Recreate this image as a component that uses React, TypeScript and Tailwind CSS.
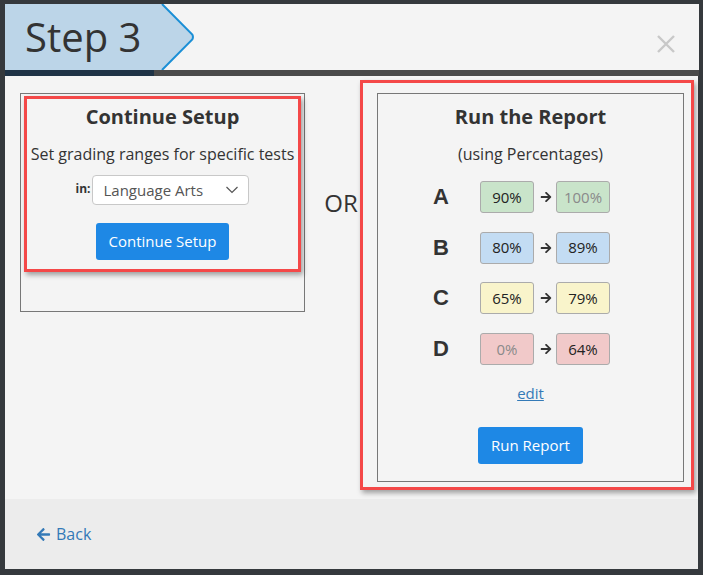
import { FaArrowLeft, FaArrowRight } from "react-icons/fa";

type Grade = { letter: string; from: string; to: string; bg: string; fromDim?: boolean; toDim?: boolean };

const grades: Grade[] = [
  { letter: "A", from: "90%", to: "100%", bg: "bg-[#c9e4ca]", toDim: true },
  { letter: "B", from: "80%", to: "89%", bg: "bg-[#c3dcf3]" },
  { letter: "C", from: "65%", to: "79%", bg: "bg-[#f9f4cb]" },
  { letter: "D", from: "0%", to: "64%", bg: "bg-[#f1c9c9]", fromDim: true },
];

function GradeBox({ value, bg, dim }: { value: string; bg: string; dim?: boolean }) {
  return (
    <div
      className={`w-[54px] h-[32px] ${bg} border border-[#ababab] rounded-[3px] flex items-center justify-center text-[15px] ${
        dim ? "text-[#8a8a8a]" : "text-[#222]"
      }`}
    >
      {value}
    </div>
  );
}

export default function App() {
  return (
    <div className="w-[703px] h-[575px] bg-[#35393d] pt-[4px] pl-[5px] overflow-hidden font-['Open_Sans',sans-serif]">
      <div className="w-[694px] flex flex-col">
        {/* Header */}
        <div className="h-[66px] bg-[#f4f4f4] flex justify-between">
          <div className="flex">
            <div className="w-[156px] bg-[#bcd5e8] pl-[20px] flex items-center text-[40px] leading-[40px] text-[#333]">
              Step 3
            </div>
            <svg width="34" height="66" viewBox="0 0 34 66">
              <path d="M0 0 L1 0 L31.3 30.6 Q32.6 33 31.3 35.4 L1 66 L0 66 Z" fill="#bcd5e8" />
              <path d="M1 0 L31.3 30.6 Q32.6 33 31.3 35.4 L1 66" stroke="#1a8fd6" strokeWidth="2" fill="none" />
            </svg>
          </div>
          <div className="pr-[24px] pt-[31px]">
            <svg width="18" height="18" viewBox="0 0 18 18">
              <path d="M1 1 L17 17 M17 1 L1 17" stroke="#c8c8c8" strokeWidth="2.4" />
            </svg>
          </div>
        </div>
        {/* backdrop gap */}
        <div className="h-[6px] flex">
          <div className="w-[149px] bg-[#1f3346]" />
          <div className="flex-1 bg-[#4a4a4a]" />
        </div>
        {/* Body */}
        <div className="w-[693px] flex flex-col">
          <div className="relative h-[423px] bg-[#f4f4f4] flex items-start pt-[17px] pl-[15px] text-[#333]">
            {/* Left box */}
            <div className="w-[285px] h-[219px] border border-[#777] flex flex-col items-center pt-[9px]">
              <div className="text-[20px] leading-[28px] font-bold">Continue Setup</div>
              <div className="mt-[11px] text-[16px] leading-[24px]">Set grading ranges for specific tests</div>
              <div className="mt-[9px] flex items-center gap-[2px]">
                <span className="text-[12px] font-bold -mt-[2px]">in:</span>
                <div className="w-[157px] h-[30px] bg-white border border-[#c8c8c8] rounded-[4px] flex items-center justify-between pl-[10px] pr-[10px] text-[15px] text-[#555]">
                  <span>Language Arts</span>
                  <svg width="12" height="8" viewBox="0 0 12 8">
                    <path d="M0.5 1 L6 6.5 L11.5 1" stroke="#555" strokeWidth="1.2" fill="none" />
                  </svg>
                </div>
              </div>
              <button className="mt-[18px] h-[37px] px-[13px] bg-[#1e88e5] text-white text-[15px] rounded-[3px]">
                Continue Setup
              </button>
            </div>
            {/* OR */}
            <div className="w-[72px] h-[219px] flex items-center justify-center text-[24px]">OR</div>
            {/* Right box */}
            <div className="w-[307px] h-[389px] border border-[#777] flex flex-col items-center pt-[9px]">
              <div className="text-[20px] leading-[28px] font-bold">Run the Report</div>
              <div className="mt-[11px] text-[16px] leading-[24px]">(using Percentages)</div>
              <div className="mt-[15px] self-start ml-[55px] flex flex-col gap-[18.67px]">
                {grades.map((g) => (
                  <div key={g.letter} className="flex items-center h-[32px]">
                    <div className="w-[17px] font-['Liberation_Sans',sans-serif] font-bold text-[22px] leading-[32px] text-[#333]">
                      {g.letter}
                    </div>
                    <div className="ml-[30px]">
                      <GradeBox value={g.from} bg={g.bg} dim={g.fromDim} />
                    </div>
                    <div className="ml-[5px] w-[13px] flex justify-center text-[#333]">
                      <FaArrowRight size={12} />
                    </div>
                    <div className="ml-[4px]">
                      <GradeBox value={g.to} bg={g.bg} dim={g.toDim} />
                    </div>
                  </div>
                ))}
              </div>
              <a className="mt-[17px] text-[15px] leading-[22px] text-[#337ab7] underline">edit</a>
              <button className="mt-[23px] h-[37px] px-[13px] bg-[#1e88e5] text-white text-[15px] rounded-[3px]">
                Run Report
              </button>
            </div>
            {/* Annotation overlays */}
            <div className="absolute left-[19px] top-[20px] w-[277px] h-[176px] border-[3px] border-[#f44848] shadow-[2px_3px_5px_rgba(0,0,0,0.35)]" />
            <div className="absolute left-[355px] top-[4px] w-[334px] h-[410px] border-[3px] border-[#f44848] shadow-[2px_3px_5px_rgba(0,0,0,0.35)]" />
          </div>
          {/* Footer */}
          <div className="h-[70px] bg-[#ececec] flex items-center pl-[31px] text-[#3379b7] text-[16px] gap-[5px]">
            <FaArrowLeft size={15} />
            <span>Back</span>
          </div>
        </div>
      </div>
    </div>
  );
}
